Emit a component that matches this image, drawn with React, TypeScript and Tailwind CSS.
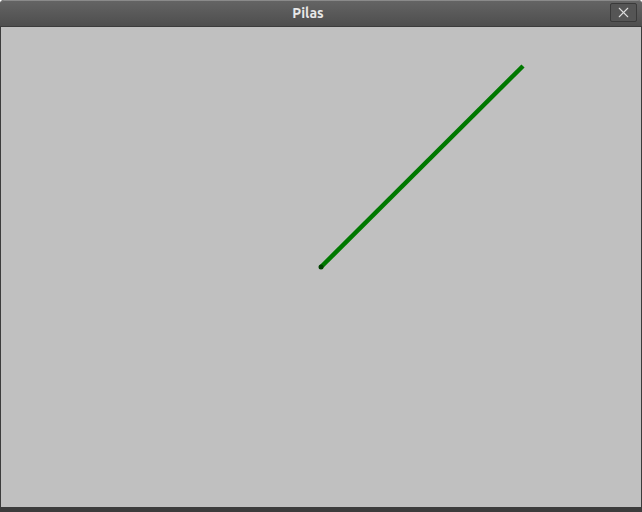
import { X } from "lucide-react";

export default function App() {
  return (
    <div className="w-[642px] h-[512px] flex flex-col bg-[#3c3c3c] overflow-hidden rounded-t-[4px]" style={{ fontFamily: "Ubuntu, 'Open Sans', 'DejaVu Sans', sans-serif" }}>
      <div className="h-[26px] shrink-0 relative flex items-center justify-center pr-[26px] bg-gradient-to-b from-[#646464] to-[#4e4e4e] border-t border-[#8a8a8a] rounded-t-[4px]">
        <span className="text-[14px] font-bold text-[#e8e8e8]">Pilas</span>
        <div className="absolute right-[5px] top-[2px] w-[27px] h-[19px] border border-[#3a3a3a] rounded-[2px] bg-[#555] flex items-center justify-center">
          <X className="w-[17px] h-[17px] text-[#dcdcdc]" strokeWidth={1.5} />
        </div>
      </div>
      <div className="flex-1 ml-[1px] mr-[1px] mb-[5px] mt-[1px] bg-[#c0c0c0] relative">
        <svg className="absolute inset-0" width="640" height="480">
          <line x1="320" y1="240" x2="522" y2="39" stroke="#007800" strokeWidth="4.5" />
          <circle cx="320" cy="240" r="2.5" fill="#004000" />
        </svg>
      </div>
    </div>
  );
}
